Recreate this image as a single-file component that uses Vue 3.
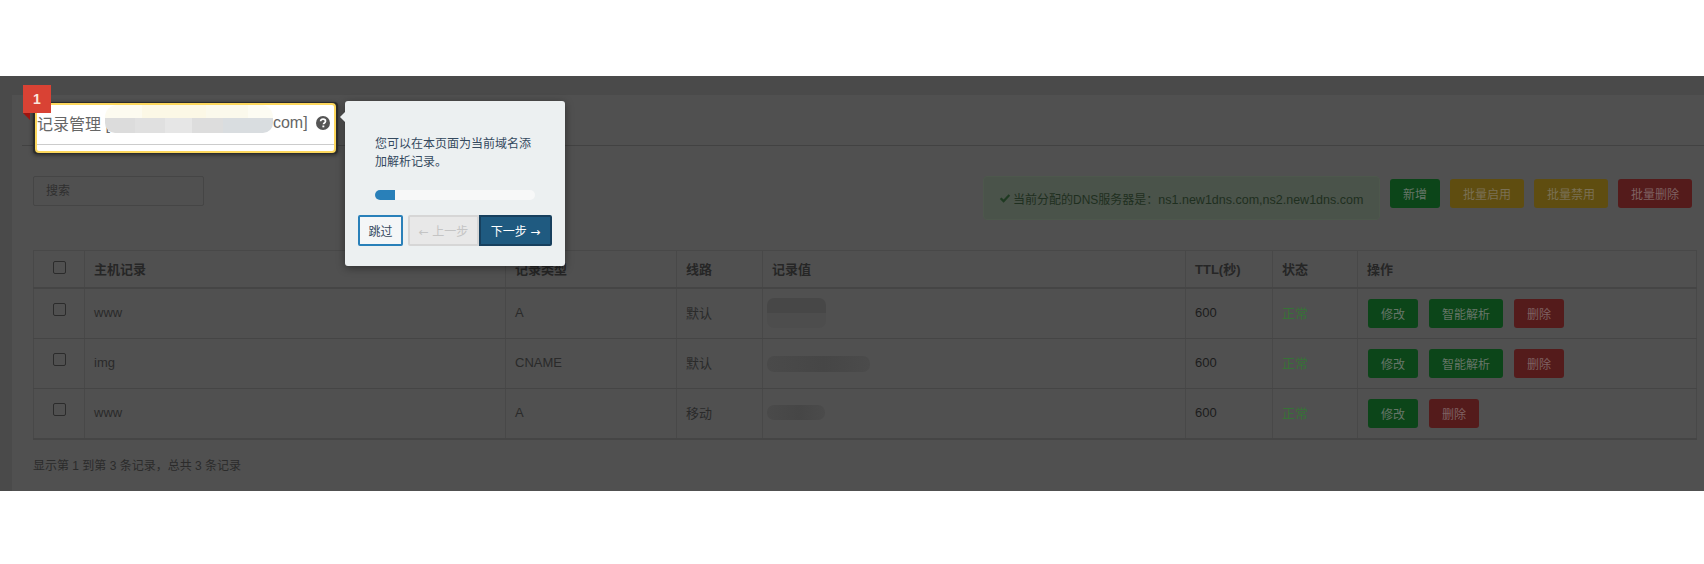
<script setup>
const columns = [51, 421, 171, 86, 423, 87, 85, 339]
const heads = ['主机记录', '记录类型', '线路', '记录值', 'TTL(秒)', '状态', '操作']
const rows = [
  { host: 'www', type: 'A', line: '默认', blur: 'blur-a', actions: [['修改', 'green'], ['智能解析', 'green'], ['删除', 'red']] },
  { host: 'img', type: 'CNAME', line: '默认', blur: 'blur-b', actions: [['修改', 'green'], ['智能解析', 'green'], ['删除', 'red']] },
  { host: 'www', type: 'A', line: '移动', blur: 'blur-c', actions: [['修改', 'green'], ['删除', 'red']] }
]
</script>

<template>
  <div class="root">
    <section class="page">
      <div class="panel">
        <div class="title-rule"></div>
        <div class="toolbar">
          <div class="search">搜索</div>
          <div class="tools">
            <div class="alert">
              <svg class="tick" viewBox="0 0 14 12" width="12" height="11"><path d="M1 6.5l1.8-1.8 2.6 2.6L11.2 1 13 2.8 5.4 11z" fill="#1f3a22" /></svg>
              <span>当前分配的DNS服务器是：<span class="hosts">ns1.new1dns.com,ns2.new1dns.com</span></span>
            </div>
            <button class="btn green add">新增</button>
            <button class="btn yellow">批量启用</button>
            <button class="btn yellow">批量禁用</button>
            <button class="btn red">批量删除</button>
          </div>
        </div>
        <table class="records">
          <colgroup>
            <col v-for="(w, i) in columns" :key="i" :style="{ width: w + 'px' }" />
          </colgroup>
          <thead>
            <tr>
              <th class="check"><span class="box"></span></th>
              <th v-for="h in heads" :key="h">{{ h }}</th>
            </tr>
          </thead>
          <tbody>
            <tr v-for="(r, i) in rows" :key="i">
              <td class="check"><span class="box"></span></td>
              <td>{{ r.host }}</td>
              <td>{{ r.type }}</td>
              <td>{{ r.line }}</td>
              <td><span class="value-blur" :class="r.blur"></span></td>
              <td class="ttl">600</td>
              <td class="ok">正常</td>
              <td>
                <div class="actions">
                  <button v-for="a in r.actions" :key="a[0]" class="btn" :class="a[1]">{{ a[0] }}</button>
                </div>
              </td>
            </tr>
          </tbody>
        </table>
        <p class="summary">显示第 1 到第 3 条记录，总共 3 条记录</p>
      </div>
    </section>

    <div class="highlight">
      <div class="inner">
        <div class="heading">
          <span>记录管理 [</span>
          <span class="name-blur"><i></i><i></i></span>
          <span class="tail">com]</span>
          <svg class="help" viewBox="0 0 14 14" width="14" height="14">
            <circle cx="7" cy="7" r="7" fill="#555" />
            <path d="M4.6 5.3c.1-1.4 1.1-2.1 2.5-2.1 1.4 0 2.4.8 2.4 2 0 1.8-2 1.8-2 3.1" fill="none" stroke="#fff" stroke-width="1.7" />
            <rect x="6.4" y="9.5" width="1.9" height="1.8" fill="#fff" />
          </svg>
        </div>
        <div class="inner-rule"></div>
      </div>
    </div>
    <div class="badge">1</div>
    <div class="ribbon"></div>

    <div class="pop">
      <div class="arrow"></div>
      <p class="pop-text">您可以在本页面为当前域名添加解析记录。</p>
      <div class="progress"><div class="fill"></div></div>
      <div class="pop-btns">
        <button class="pbtn skip">跳过</button>
        <div class="pair">
          <button class="pbtn prev"><span class="arw">←</span> 上一步</button>
          <button class="pbtn next">下一步 <span class="arw">→</span></button>
        </div>
      </div>
    </div>
  </div>
</template>

<style>
html, body { background: #fff; }
</style>

<style scoped>
.root {
  position: relative;
  width: 1704px;
  height: 564px;
  overflow: hidden;
  background: #fff;
  font-family: "Liberation Sans", "Noto Sans CJK SC", sans-serif;
  font-size: 13px;
  color: #2e2e2e;
}
.page {
  position: relative;
  top: 76px;
  height: 415px;
  background: #4a4a4a;
  padding: 19px 0 0 12px;
  box-sizing: border-box;
}
.panel {
  height: 396px;
  background: #505050;
  padding-left: 21px;
  box-sizing: border-box;
}
.title-rule {
  height: 50px;
  margin-left: -11px;
  border-bottom: 1px solid #424242;
}
.toolbar {
  display: flex;
  justify-content: space-between;
  padding-top: 30px;
  height: 74px;
}
.search {
  width: 171px;
  height: 30px;
  box-sizing: border-box;
  border: 1px solid #454545;
  border-radius: 2px;
  padding-left: 12px;
  line-height: 28px;
  font-size: 12px;
  color: #2f2f2f;
}
.tools {
  display: flex;
  align-items: flex-start;
  gap: 10px;
  margin-right: 12px;
}
.alert {
  width: 397px;
  height: 44px;
  box-sizing: border-box;
  padding-left: 15px;
  display: flex;
  align-items: center;
  gap: 2px;
  background: #4a534a;
  border: 1px solid #4d574c;
  border-radius: 4px;
  color: #1f2f20;
  font-size: 12px;
  white-space: nowrap;
}
.hosts { font-size: 12.5px; }
.tick { flex: none; }
.btn {
  height: 29px;
  padding: 0 13px;
  border: 0;
  border-radius: 3px;
  font: 12px "Liberation Sans", "Noto Sans CJK SC", sans-serif;
  white-space: nowrap;
  margin-top: 3px;
}
.green { background: #0c4519; color: #667568; }
.yellow { background: #5f4d10; color: #7a7054; }
.red { background: #541b1b; color: #7f6262; }
.tools .btn { width: 74px; padding: 0; }
.tools .add { width: 50px; }
.records {
  table-layout: fixed;
  width: 1663px;
  border-collapse: collapse;
}
.records th, .records td {
  border: 1px solid #484848;
  padding: 0 9px 2px;
  text-align: left;
}
.records th {
  height: 34px;
  font-weight: 700;
  border-bottom: 2px solid #454545;
  color: #262626;
}
.records td {
  height: 47px;
  vertical-align: middle;
  border-bottom-color: #454545;
  color: #2a2a2a;
}
.records tbody tr:last-child td { border-bottom-width: 2px; }
.records .check { padding: 0; text-align: center; }
.box {
  display: inline-block;
  width: 13px;
  height: 13px;
  box-sizing: border-box;
  border: 1px solid #2b2b2b;
  border-radius: 2px;
  position: relative;
  top: -3px;
}
th .box { top: 0; }
.value-blur {
  display: block;
  margin-left: -5px;
  border-radius: 7px;
  background: linear-gradient(90deg, #4a4a4a, #464646 55%, #4b4b4b);
}
.blur-a { width: 59px; height: 30px; background: linear-gradient(180deg, #474747 50%, #4d4d4d 50%); }
.blur-b { width: 103px; height: 16px; margin-top: 2px; }
.blur-c { width: 58px; height: 15px; }
.records .ttl { font-weight: 400; color: #1c1c1c; }
.records .ok { color: #377237; }
.actions {
  display: flex;
  gap: 11px;
  padding-left: 1px;
  margin-top: -2px;
}
.actions .btn { min-width: 50px; box-sizing: border-box; }
.summary {
  margin: 17px 0 0;
  font-size: 12px;
  line-height: 18px;
  color: #2b2b2b;
}

.highlight {
  position: absolute;
  left: 33px;
  top: 102px;
  width: 305px;
  height: 52px;
  box-sizing: border-box;
  background: #2c2c2c;
  border-radius: 4px;
  padding: 1px 2px 1px 2px;
  box-shadow: 0 1px 4px rgba(0, 0, 0, .5);
}
.inner {
  height: 100%;
  box-sizing: border-box;
  background: #fff;
  border: 2px solid #fcd75d;
  border-radius: 4px;
  padding: 2px 0 0 0;
  overflow: hidden;
}
.heading {
  display: flex;
  align-items: center;
  height: 32px;
  font-size: 16px;
  color: #666;
  white-space: nowrap;
}
.name-blur {
  display: flex;
  flex-direction: column;
  align-self: flex-start;
  width: 168px;
  margin-top: -2px;
  margin-left: -5px;
  flex: none;
}
.name-blur i { display: block; }
.name-blur i:first-child {
  height: 13px;
  background: linear-gradient(90deg, #fdfbf0 0 22%, #fcf8e6 22% 60%, #fbf9ec 60% 85%, #fdfcf3 85%);
  border-radius: 12px 12px 0 0;
}
.name-blur i:last-child {
  height: 15px;
  background: linear-gradient(90deg, #dcdcdc 0 18%, #e0e0e0 18% 36%, #e6e6e6 36% 52%, #dddddd 52% 70%, #d9dde0 70%);
  border-radius: 0 0 10px 10px;
}
.help {
  flex: none;
  margin-left: 8px;
}
.inner-rule {
  height: 1px;
  margin-top: 5px;
  background: #ccc;
}
.badge {
  position: absolute;
  left: 23px;
  top: 85px;
  width: 28px;
  height: 28px;
  background: #d94234;
  color: #fbe6dc;
  font: 700 14px/28px "Liberation Sans", sans-serif;
  text-align: center;
}
.ribbon {
  position: absolute;
  left: 23px;
  top: 113px;
  border-top: 7px solid #9c1410;
  border-left: 7px solid transparent;
}

.pop {
  position: absolute;
  left: 345px;
  top: 101px;
  width: 220px;
  height: 165px;
  box-sizing: border-box;
  background: #ecf0f1;
  border-radius: 3px;
  padding: 34px 13px 0;
  box-shadow: 0 2px 8px rgba(0, 0, 0, .4);
  color: #34495e;
}
.arrow {
  position: absolute;
  left: -5px;
  top: 11px;
  border-right: 5px solid #ecf0f1;
  border-top: 5px solid transparent;
  border-bottom: 5px solid transparent;
}
.pop-text {
  margin: 0 17px;
  font-size: 12px;
  line-height: 18px;
  height: 36px;
}
.progress {
  margin: 19px 17px 0;
  height: 10px;
  background: #f7f8f8;
  border-radius: 5px;
  overflow: hidden;
}
.fill {
  width: 20px;
  height: 100%;
  background: #2980b9;
}
.pop-btns {
  display: flex;
  justify-content: space-between;
  margin-top: 15px;
}
.pair { display: flex; }
.pbtn {
  height: 31px;
  box-sizing: border-box;
  border: 2px solid;
  border-radius: 2px;
  font: 12px "Liberation Sans", "Noto Sans CJK SC", sans-serif;
  padding: 0;
}
.arw { font-family: "DejaVu Sans", sans-serif; }
.skip { width: 45px; background: #f4f6f7; border-color: #2980b9; color: #34495e; }
.prev { width: 71px; background: #e8e8e8; border-color: #d6d6d6; color: #c4c4c4; border-radius: 2px 0 0 2px; }
.next { width: 73px; background: #1f5a80; border-color: #17405e; color: #fff; border-radius: 0 2px 2px 0; }
</style>
